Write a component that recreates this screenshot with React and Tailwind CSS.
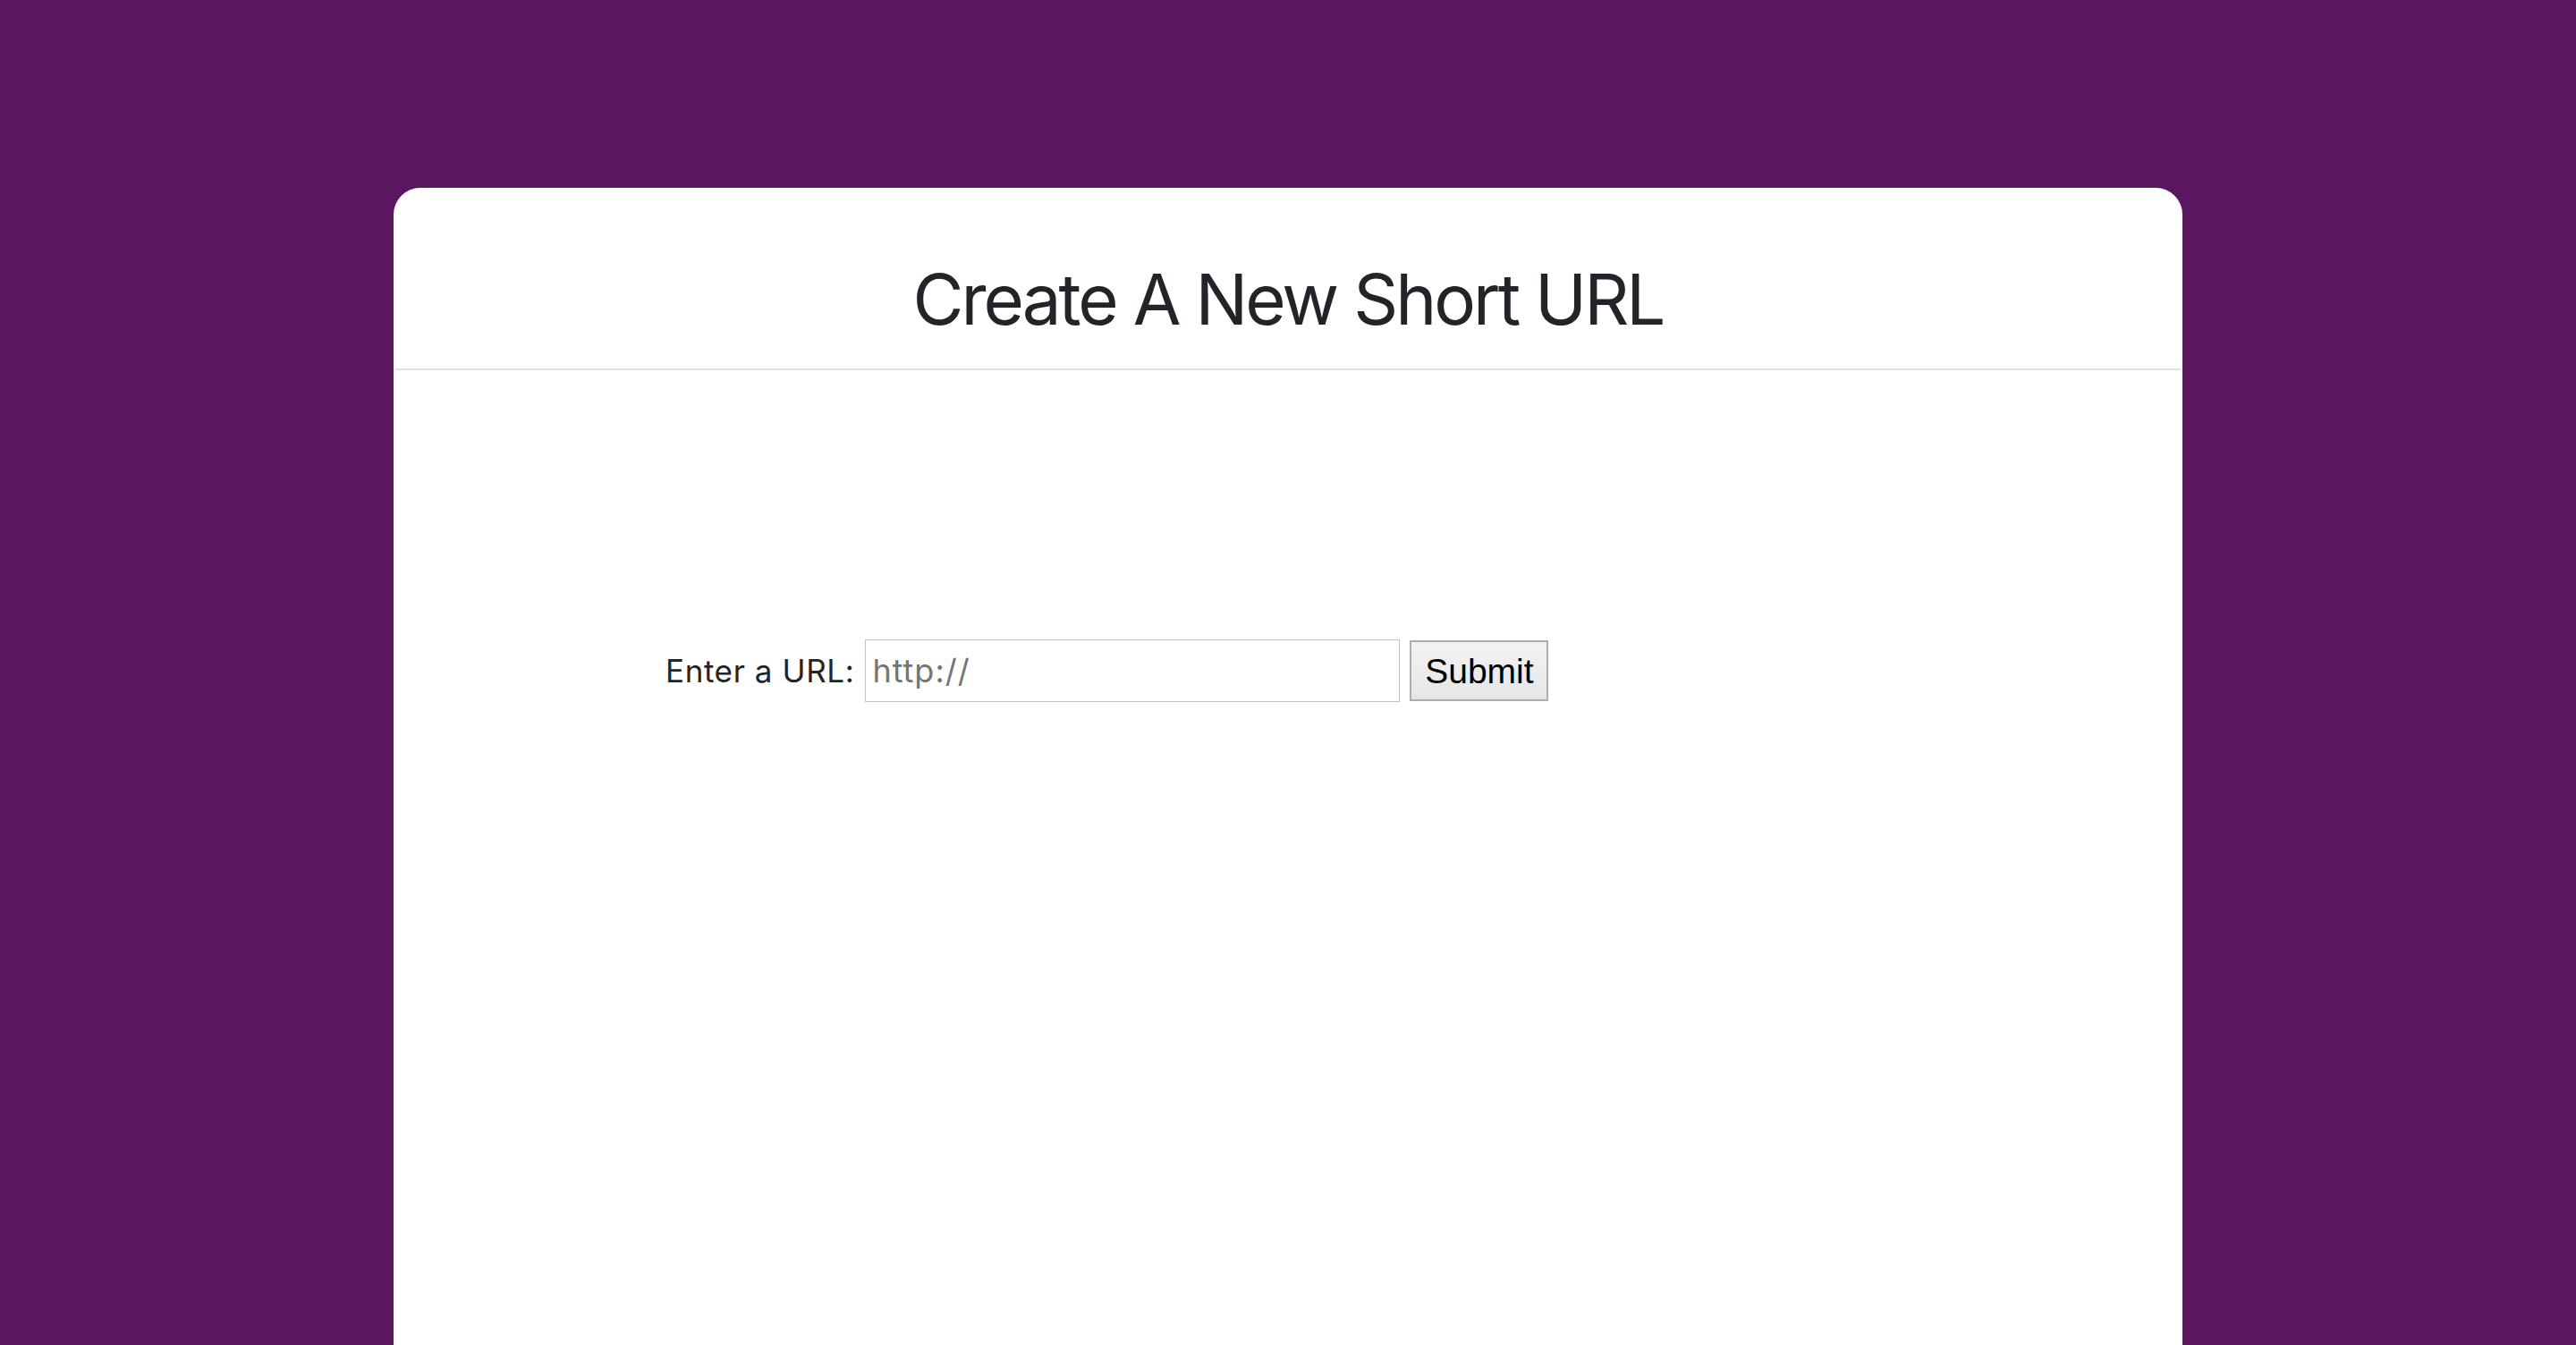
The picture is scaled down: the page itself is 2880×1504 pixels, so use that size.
import React, { useState } from 'react';

export default function App() {
  const [url, setUrl] = useState('');

  return (
    <div className="h-screen overflow-hidden bg-[#5b1660] pt-[210px] px-[440px]" style={{ fontFamily: 'Inter, "Noto Sans", sans-serif' }}>
      <div className="bg-white rounded-t-[30px] border-2 border-white min-h-[1400px]">
        <div className="h-[202px] flex items-center justify-center border-b-2 border-[#e2e2e2] pt-[46px]">
          <h1 className="text-[78px] leading-none font-normal text-[#212529] tracking-[-3px]">Create A New Short URL</h1>
        </div>
        <form
          className="flex items-center pt-[301px] pl-[302px]"
          onSubmit={(e) => e.preventDefault()}
        >
          <label className="text-[35px] text-[#212529] leading-none tracking-[0.6px]">Enter a URL:</label>
          <input
            className="ml-[12px] w-[598px] h-[70px] border border-[#c3c3c3] px-[7px] text-[36px] tracking-[1px] text-[#212529] placeholder:text-[#757575] outline-none"
            placeholder="http://"
            value={url}
            onChange={(e) => setUrl(e.target.value)}
          />
          <button
            type="submit"
            className="ml-[11px] w-[155px] h-[68px] border-2 border-[#adadad] bg-gradient-to-b from-[#f3f3f3] to-[#e6e6e6] text-[39px] text-black leading-none"
            style={{ fontFamily: '"Liberation Sans", Arial, sans-serif' }}
          >
            Submit
          </button>
        </form>
      </div>
    </div>
  );
}
